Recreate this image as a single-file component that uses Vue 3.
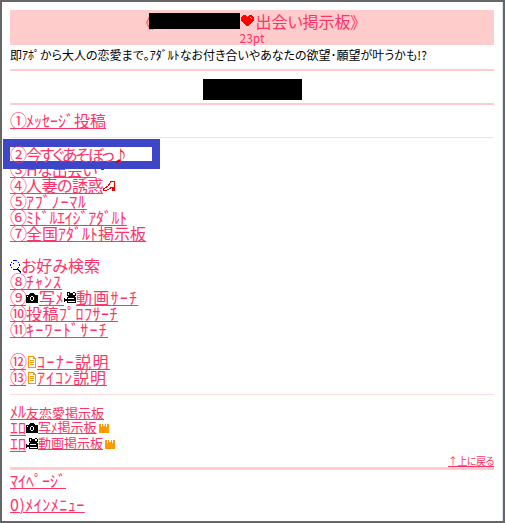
<script setup>
</script>
<template>
  <svg class="defs" width="0" height="0">
    <symbol id="cam" viewBox="0 0 12 12">
      <path d="M0 3h3V2h1V1h4v1h1v1h3v8H0z" fill="#000"/>
      <path d="M5 4h2v1h1v3H7v1H5V8H4V5h1z" fill="#fff"/>
      <path d="M5 5h2v3H5z" fill="#000"/>
      <path d="M1 4h1v1H1z" fill="#fff"/>
    </symbol>
    <symbol id="vid" viewBox="0 0 12 12">
      <path d="M3 0h3v1h3V0h2v1h1v3h-1v1h1v6H3V5h1V4H3z" fill="#000"/>
      <path d="M4 1h1v2H4zM9 1h2v2H9z" fill="#fff"/>
      <path d="M4 6h6v1H4zM4 9h7v1H4z" fill="#fff"/>
      <path d="M0 6h1v1h2v2H1v1H0z" fill="#000"/>
    </symbol>
    <symbol id="doc" viewBox="0 0 8 12">
      <path d="M0 0h6v1h1v1h1v10H0zM1 1v10h6V3H5V1z" fill="#f90"/>
      <path d="M2 4h4v1H2zM2 6h4v1H2zM2 8h4v1H2z" fill="#f90"/>
    </symbol>
    <symbol id="crown" viewBox="0 0 10 9">
      <path d="M0 0h2v3h1V0h1v2h2V0h1v3h1V0h2v9H0z" fill="#f90"/>
    </symbol>
  </svg>
  <div class="frame">
    <div class="page">
      <div class="head">
        <div class="title">《<span class="black title-black"></span><svg class="px heart" width="13" height="12" viewBox="0 0 13 12"><path d="M2 0h3v1h1v1h1V1h1V0h3v1h1v1h1v4h-1v1h-1v1h-1v1H9v1H8v1H5v-1H4V9H3V8H2V7H1V6H0V2h1V1h1z" fill="#f00"/><path d="M9 2h1v1h1v1h-1V3H9z" fill="#fcc"/></svg><span>出会い掲示板》</span></div>
        <div class="pt">23pt</div>
      </div>
      <div class="lead">即ｱﾎﾟから大人の恋愛まで｡ｱﾀﾞﾙﾄなお付き合いやあなたの欲望･願望が叶うかも!?</div>
      <div class="rule"></div>
      <div class="banner"><span class="black"></span></div>
      <div class="rule"></div>
      <div class="row first"><a><span class="n">①</span>ﾒｯｾｰｼﾞ投稿</a></div>
      <div class="thin"></div>
      <div class="focus"><a class="squeeze"><span class="n">②</span>今すぐあそぼっ</a><span class="note">♪</span></div>
      <div class="row"><a class="tight3"><span class="n">③</span>Hな出会い</a><svg class="px high" width="11" height="10" viewBox="0 0 11 10"><path d="M2 0h2v1h1v1h1V1h1V0h2v1h1v4H9v1H8v1H7v1H4V7H3V6H2V5H1V1h1z" fill="#f00"/></svg></div>
      <div class="row"><a class="tight2"><span class="n">④</span>人妻の誘惑</a><svg class="px" width="12" height="12" viewBox="0 0 12 12"><path d="M8 1h3v9h-1V7H9L6 9 4 10H0V9l2-1 3-2 2-3z" fill="none" stroke="#e00"/><path d="M9 7h2v4H9z" fill="#e00"/></svg></div>
      <div class="row"><a class="sp2"><span class="n">⑤</span>ｱﾌﾞﾉｰﾏﾙ</a></div>
      <div class="row"><a class="tight1"><span class="n">⑥</span>ﾐﾄﾞﾙｴｲｼﾞｱﾀﾞﾙﾄ</a></div>
      <div class="row"><a><span class="n">⑦</span>全国ｱﾀﾞﾙﾄ掲示板</a></div>
      <div class="row"></div>
      <div class="row"><svg class="px" width="11" height="13" viewBox="0 0 11 13"><path d="M3 0h4v1H3zM1 2h1v1H1zM8 2h1v1H8zM0 4h1v2H0zM9 4h1v2H9zM1 7h1v1H1zM8 7h1v1H8zM3 9h4v1H3z" fill="#00f"/><path d="M3 3h1v1H3z" fill="#00f"/><path d="M7 8h1v1h1v1h1v1h1v2h-1v-1H9v-1H8v-1H7z" fill="#006"/></svg><span class="pink">お好み検索</span></div>
      <div class="row"><a class="sp3"><span class="n">⑧</span>ﾁｬﾝｽ</a></div>
      <div class="row"><a><span class="n">⑨</span></a><svg class="ico" width="12" height="12"><use href="#cam"/></svg><a class="sp1 lm">写ﾒ</a><svg class="ico" width="12" height="12"><use href="#vid"/></svg><a class="sp4">動画ｻｰﾁ</a></div>
      <div class="row"><a class="sp1"><span class="n">⑩</span>投稿ﾌﾟﾛﾌｻｰﾁ</a></div>
      <div class="row"><a class="sp4"><span class="n">⑪</span>ｷｰﾜｰﾄﾞｻｰﾁ</a></div>
      <div class="row"></div>
      <div class="row"><a><span class="n">⑫</span></a><svg class="ico doc" width="8" height="12"><use href="#doc"/></svg><a class="sp5">ｺｰﾅｰ説明</a></div>
      <div class="row"><a><span class="n">⑬</span></a><svg class="ico doc" width="8" height="12"><use href="#doc"/></svg><a class="sp3">ｱｲｺﾝ説明</a></div>
      <div class="thin"></div>
      <div class="small-list">
        <div class="row"><a><span class="big">ﾒﾙ</span>友恋愛掲示板</a></div>
        <div class="row"><a class="big">ｴﾛ</a><svg class="ico" width="12" height="12"><use href="#cam"/></svg><a>写ﾒ掲示板</a><svg class="ico crown" width="10" height="9"><use href="#crown"/></svg></div>
        <div class="row"><a class="big">ｴﾛ</a><svg class="ico" width="12" height="12"><use href="#vid"/></svg><a>動画掲示板</a><svg class="ico crown" width="10" height="9"><use href="#crown"/></svg></div>
      </div>
      <div class="top-link"><a>↑上に戻る</a></div>
      <div class="rule bold"></div>
      <div class="row my"><a>ﾏｲﾍﾟｰｼﾞ</a></div>
      <div class="row menu"><a class="sp1">0)ﾒｲﾝﾒﾆｭｰ</a></div>
    </div>
  </div>
</template>
<style>
html, body { margin: 0; background: #666; }
</style>
<style scoped>
.defs { position: absolute; }
.frame {
  width: 505px;
  height: 523px;
  box-sizing: border-box;
  padding: 2px;
  background: #666;
  overflow: hidden;
}
.page {
  height: 100%;
  box-sizing: border-box;
  background: #fff;
  border-right: 1px solid #d6e4f5;
  padding: 8px 8px 0 8px;
  font-family: "Noto Sans CJK JP", sans-serif;
  font-feature-settings: "palt";
  font-size: 16px;
  line-height: 16px;
  color: #000;
}
a, .pink { color: #f36; }
a { text-decoration: underline; text-decoration-thickness: 1px; text-underline-offset: 1px; white-space: nowrap; }
svg { flex: none; }
.px, .ico { shape-rendering: crispEdges; }
.n { font-size: 17px; line-height: 0; font-feature-settings: normal; letter-spacing: -1px; }
.big { font-size: 16px; }
.sp1 { letter-spacing: .5px; }
.sp2 { letter-spacing: .8px; }
.sp3 { letter-spacing: 1px; }
.sp4 { letter-spacing: 1.25px; }
.sp5 { letter-spacing: 1.5px; }
.tight1 { letter-spacing: -.3px; }
.tight2 { letter-spacing: -.5px; }
.tight3 { letter-spacing: -.8px; }
.squeeze { letter-spacing: -2.2px; }
.lm { margin-left: 1px; }
.high { align-self: flex-start; margin-left: 1px; }
.black { display: inline-block; background: #000; width: 99px; height: 21px; }
.head { background: #fcc; color: #f36; text-align: center; height: 35px; }
.title { display: flex; justify-content: center; align-items: center; height: 20px; padding-top: 1px; }
.title-black { width: 91px; height: 16px; margin: 0 1px 0 -4px; }
.heart { margin-right: 1px; }
.pt { font-size: 12px; line-height: 14px; font-feature-settings: normal; }
.lead { font-size: 12px; line-height: 19px; height: 24px; }
.rule { background: #fcc; height: 2px; }
.thin { height: 1px; background: #fdd; margin-top: 8px; }
.banner { display: flex; justify-content: center; padding: 8px 0 3px; }
.row { display: flex; align-items: center; height: 16px; }
.row a, .row .pink { align-self: flex-start; line-height: 14px; }
.first { margin-top: 8px; }
.focus {
  position: relative;
  z-index: 1;
  width: 142px;
  height: 14px;
  margin: 1px 0 -7px -7px;
  line-height: 14px;
  white-space: nowrap;
  background: #fff;
  border: 8px solid #3d46c8;
  border-left-width: 7px;
}
.focus a { text-decoration: none; }
.note { color: #e00; font-weight: 700; }
.doc { margin: 0 1px 0 2px; }
.small-list { margin-top: 9px; font-size: 13px; }
.crown { margin-left: 2px; }
.top-link { text-align: right; font-size: 10px; line-height: 12px; letter-spacing: -.5px; margin-top: 3px; }
.bold { height: 3px; }
.my { margin-top: 3px; }
.menu { margin-top: 8px; }
</style>
